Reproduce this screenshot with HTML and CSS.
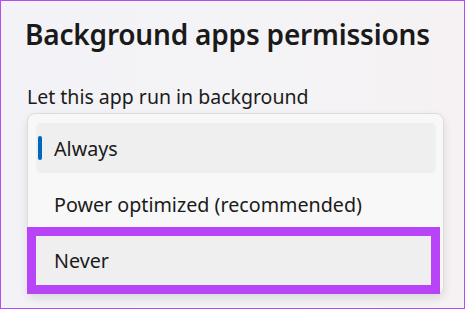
FILE: index.html
```html
<!DOCTYPE html>
<html>
<head>
<meta charset="utf-8">
<link rel="stylesheet" href="styles.css">
</head>
<body>
<div class="frame">
  <h1 class="title">Background apps permissions</h1>
  <p class="label">Let this app run in background</p>
  <div class="menu">
    <div class="item selected"><span class="indicator"></span>Always</div>
    <div class="item">Power optimized (recommended)</div>
    <div class="item never">Never</div>
  </div>
  <div class="annotation"></div>
</div>
</body>
</html>
```

FILE: styles.css
```css
* { box-sizing: border-box; }
html, body { margin: 0; padding: 0; }
body {
  width: 465px;
  height: 309px;
  overflow: hidden;
  font-family: "Noto Sans", "Open Sans", sans-serif;
}
.frame {
  position: relative;
  width: 465px;
  height: 309px;
  border: 1px solid #b84cf3;
  background: linear-gradient(90deg, #f3f3f7 0%, #f4f3f6 60%, #f6f2f3 100%);
  padding: 14px 0 0 24px;
  display: flex;
  flex-direction: column;
}
.title {
  margin: 0;
  font-size: 28px;
  line-height: 38px;
  font-weight: 600;
  color: #1a1a1a;
  letter-spacing: -0.2px;
}
.label {
  margin: 32px 0 0 2px;
  font-size: 19.5px;
  line-height: 24px;
  color: #1b1b1b;
}
.menu {
  margin: 4px 0 0 2px;
  width: 417px;
  background: #f8f8f8;
  border: 1px solid #dcdcdc;
  border-radius: 8px;
  padding: 9px 7px 9px 8px;
  display: flex;
  flex-direction: column;
  gap: 6px;
  box-shadow: 0 4px 10px rgba(0,0,0,0.10);
}
.item {
  position: relative;
  height: 50px;
  border-radius: 5px;
  display: flex;
  align-items: center;
  padding-left: 18px;
  font-size: 19.7px;
  color: #1b1b1b;
}
.item.selected { background: #efefef; }
.item.never { background: #efefef; }
.indicator {
  position: absolute;
  left: 2px;
  top: 13px;
  width: 4px;
  height: 24px;
  border-radius: 2px;
  background: #0067c0;
}
.annotation {
  position: absolute;
  left: 26px;
  top: 226px;
  width: 413px;
  height: 67px;
  border: 9px solid #b744f7;
}
```
